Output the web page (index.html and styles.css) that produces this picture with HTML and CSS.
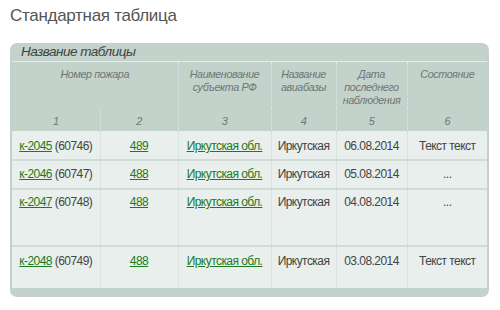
FILE: index.html
```html
<!DOCTYPE html>
<html lang="ru">
<head>
<meta charset="utf-8">
<title>Стандартная таблица</title>
<link rel="stylesheet" href="styles.css">
</head>
<body>
<div class="page">
  <h1 class="title">Стандартная таблица</h1>
  <div class="panel">
    <div class="caption">Название таблицы</div>
    <table class="grid">
      <colgroup>
        <col class="c1"><col class="c2"><col class="c3"><col class="c4"><col class="c5"><col class="c6">
      </colgroup>
      <thead>
        <tr class="head-main">
          <th colspan="2">Номер пожара</th>
          <th>Наименование<br>субъекта РФ</th>
          <th>Название<br>авиабазы</th>
          <th>Дата<br>последнего<br>наблюдения</th>
          <th>Состояние</th>
        </tr>
        <tr class="head-num">
          <th>1</th><th>2</th><th>3</th><th>4</th><th>5</th><th>6</th>
        </tr>
      </thead>
      <tbody>
        <tr class="r1">
          <td><a href="#">к-2045</a> (60746)</td>
          <td><a href="#">489</a></td>
          <td><a href="#">Иркутская обл.</a></td>
          <td>Иркутская</td>
          <td>06.08.2014</td>
          <td>Текст текст</td>
        </tr>
        <tr class="r2">
          <td><a href="#">к-2046</a> (60747)</td>
          <td><a href="#">488</a></td>
          <td><a href="#">Иркутская обл.</a></td>
          <td>Иркутская</td>
          <td>05.08.2014</td>
          <td class="dots">...</td>
        </tr>
        <tr class="r3">
          <td><a href="#">к-2047</a> (60748)</td>
          <td><a href="#">488</a></td>
          <td><a href="#">Иркутская обл.</a></td>
          <td>Иркутская</td>
          <td>04.08.2014</td>
          <td class="dots">...</td>
        </tr>
        <tr class="r4">
          <td><a href="#">к-2048</a> (60749)</td>
          <td><a href="#">488</a></td>
          <td><a href="#">Иркутская обл.</a></td>
          <td>Иркутская</td>
          <td>03.08.2014</td>
          <td>Текст текст</td>
        </tr>
      </tbody>
    </table>
  </div>
</div>
</body>
</html>
```

FILE: styles.css
```css
html, body {
  margin: 0;
  padding: 0;
  background: #ffffff;
}

.page {
  padding: 6px 0 0 10px;
  font-family: "Liberation Sans", Arial, sans-serif;
}

.title {
  margin: 0;
  font-size: 17px;
  letter-spacing: -0.3px;
  line-height: 20px;
  font-weight: normal;
  color: #555555;
}

.panel {
  margin-top: 17px;
  width: 475px;
  padding: 0 2px 9px 2px;
  background: #c3d2cb;
  border-radius: 7px;
}

.caption {
  height: 18px;
  line-height: 18px;
  padding-left: 9px;
  font-size: 13.5px;
  letter-spacing: -0.5px;
  font-style: italic;
  color: #3c4440;
  border-bottom: 1px solid #e4ece8;
}

.grid {
  width: 475px;
  border-collapse: collapse;
  table-layout: fixed;
}

.c1 { width: 88px; }
.c2 { width: 78px; }
.c3 { width: 93px; }
.c4 { width: 65px; }
.c5 { width: 71px; }
.c6 { width: 80px; }

.grid th {
  font-weight: normal;
  font-style: italic;
  font-size: 10.8px;
  letter-spacing: -0.4px;
  line-height: 13px;
  color: #6d7873;
  text-align: center;
  vertical-align: top;
  padding: 0;
  border-left: 1px dotted #e2eae6;
}

.grid th:first-child {
  border-left: none;
}

.head-main th {
  height: 40px;
  padding-top: 6px;
}

.head-num th {
  height: 16px;
  padding-top: 7px;
  font-size: 11px;
}

.grid td {
  font-size: 12px;
  letter-spacing: -0.55px;
  line-height: 14px;
  color: #444444;
  text-align: center;
  vertical-align: top;
  padding: 6px 0 0 0;
  background: #e8efec;
  border-left: 1px dotted #cdd7d2;
  border-top: 2px solid #d0dcd6;
  white-space: nowrap;
}

.grid td:first-child {
  border-left: none;
}

.grid tbody tr.r1 td {
  border-top: none;
  padding-top: 8px;
  height: 20px;
}

.r2 td { height: 21px; }
.grid tbody tr.r3 td { height: 50px; padding-top: 5px; }
.grid tbody tr.r4 td { height: 34px; padding-top: 7px; }

.grid a {
  color: #1d7a1d;
  text-decoration: underline;
}

.dots {
  color: #888888;
}
```
